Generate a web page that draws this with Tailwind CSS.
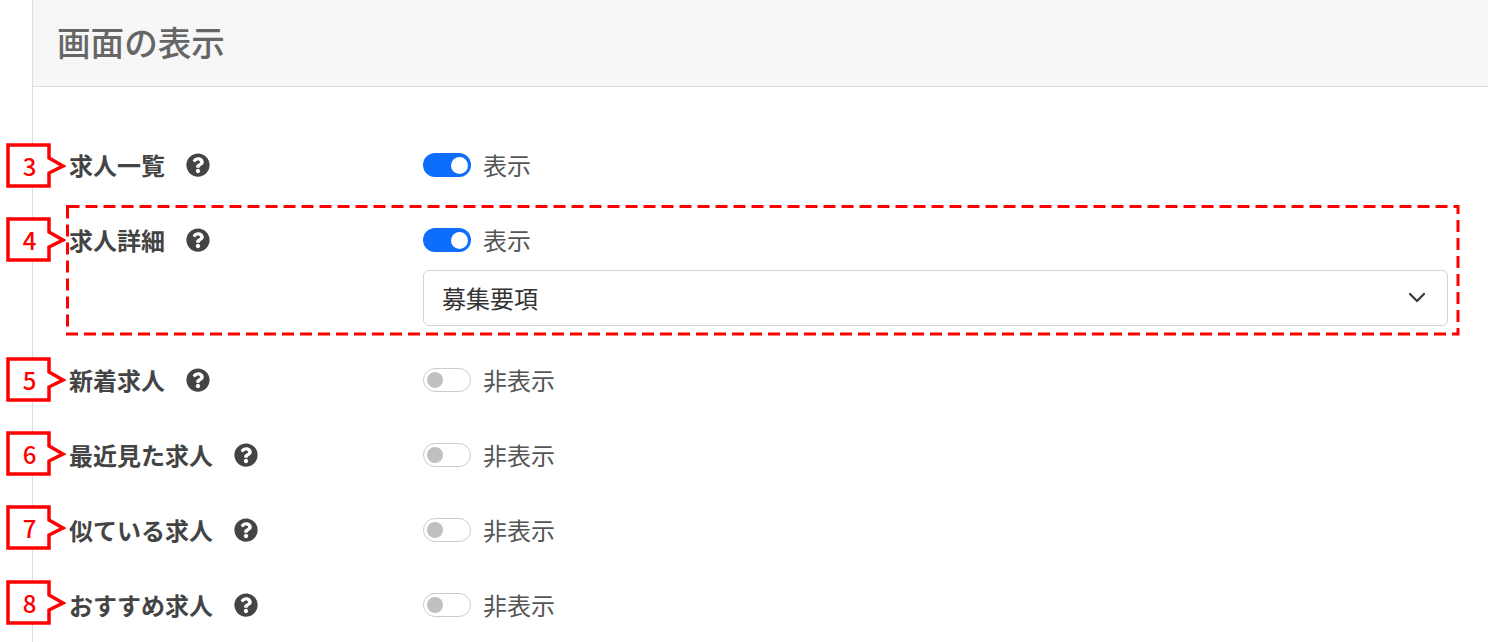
<!DOCTYPE html>
<html lang="ja">
<head>
    <meta charset="UTF-8">
    <meta name="viewport" content="width=device-width, initial-scale=1.0">
    <title>画面の表示</title>
    <script src="https://cdn.jsdelivr.net/npm/@tailwindcss/browser@4"></script>
</head>
<body class="relative h-[642px] overflow-hidden bg-white font-['Noto_Sans_CJK_JP','Noto_Sans',sans-serif]">
    <!-- Main panel -->
    <main class="ml-8 h-full border-l border-[#ddd]">
        <h1 class="h-[87px] border-b border-[#ddd] bg-[#f7f7f7] pl-6 pt-[18px] text-[33.6px] leading-[48px] font-medium text-[#666]">画面の表示</h1>

        <div class="pl-9 pt-[66px]">
            <div class="flex h-6 items-center">
                <div class="flex w-[354px] items-center gap-[21px]">
                    <span class="text-2xl font-bold text-[#444]">求人一覧</span>
                    <svg class="size-6 text-[#444]" viewBox="0 0 512 512"><path fill="currentColor" d="M504 256c0 136.997-111.043 248-248 248S8 392.997 8 256C8 119.083 119.043 8 256 8s248 111.083 248 248zM262.655 90c-54.497 0-89.255 22.957-116.549 63.758-3.536 5.286-2.353 12.415 2.715 16.258l34.699 26.31c5.205 3.947 12.621 3.008 16.665-2.122 17.864-22.658 30.113-35.797 57.303-35.797 20.429 0 45.698 13.148 45.698 32.958 0 14.976-12.363 22.667-32.534 33.976C247.128 238.528 216 254.941 216 296v4c0 6.627 5.373 12 12 12h56c6.627 0 12-5.373 12-12v-1.333c0-28.462 83.186-29.647 83.186-106.667 0-58.002-60.165-102-116.531-102zM256 338c-25.365 0-46 20.635-46 46 0 25.364 20.635 46 46 46s46-20.636 46-46c0-25.365-20.635-46-46-46z"/></svg>
                </div>
                <div class="flex items-center gap-3">
                    <span class="flex h-6 w-12 items-center justify-end rounded-full bg-[#0d6efd] px-[3px]"><span class="size-[17px] rounded-full bg-white"></span></span>
                    <span class="text-2xl text-[#555]">表示</span>
                </div>
            </div>

            <div class="mt-[51px] flex items-start">
                <div class="flex h-6 w-[354px] items-center gap-[21px]">
                    <span class="text-2xl font-bold text-[#444]">求人詳細</span>
                    <svg class="size-6 text-[#444]" viewBox="0 0 512 512"><path fill="currentColor" d="M504 256c0 136.997-111.043 248-248 248S8 392.997 8 256C8 119.083 119.043 8 256 8s248 111.083 248 248zM262.655 90c-54.497 0-89.255 22.957-116.549 63.758-3.536 5.286-2.353 12.415 2.715 16.258l34.699 26.31c5.205 3.947 12.621 3.008 16.665-2.122 17.864-22.658 30.113-35.797 57.303-35.797 20.429 0 45.698 13.148 45.698 32.958 0 14.976-12.363 22.667-32.534 33.976C247.128 238.528 216 254.941 216 296v4c0 6.627 5.373 12 12 12h56c6.627 0 12-5.373 12-12v-1.333c0-28.462 83.186-29.647 83.186-106.667 0-58.002-60.165-102-116.531-102zM256 338c-25.365 0-46 20.635-46 46 0 25.364 20.635 46 46 46s46-20.636 46-46c0-25.365-20.635-46-46-46z"/></svg>
                </div>
                <div class="w-[1025px]">
                    <div class="flex h-6 items-center gap-3">
                        <span class="flex h-6 w-12 items-center justify-end rounded-full bg-[#0d6efd] px-[3px]"><span class="size-[17px] rounded-full bg-white"></span></span>
                        <span class="text-2xl text-[#555]">表示</span>
                    </div>
                    <div class="mt-[18px] flex h-14 items-center justify-between rounded-md border border-[#ced4da] pl-[18px] pr-[22px]">
                        <span class="text-2xl text-[#333]">募集要項</span>
                        <svg class="size-4 text-[#343a40]" viewBox="0 0 16 16"><path fill="none" stroke="currentColor" stroke-linecap="round" stroke-linejoin="round" stroke-width="2.2" d="m1 4 7 7 7-7"/></svg>
                    </div>
                </div>
            </div>

            <div class="mt-[42px] flex h-6 items-center">
                <div class="flex w-[354px] items-center gap-[21px]">
                    <span class="text-2xl font-bold text-[#444]">新着求人</span>
                    <svg class="size-6 text-[#444]" viewBox="0 0 512 512"><path fill="currentColor" d="M504 256c0 136.997-111.043 248-248 248S8 392.997 8 256C8 119.083 119.043 8 256 8s248 111.083 248 248zM262.655 90c-54.497 0-89.255 22.957-116.549 63.758-3.536 5.286-2.353 12.415 2.715 16.258l34.699 26.31c5.205 3.947 12.621 3.008 16.665-2.122 17.864-22.658 30.113-35.797 57.303-35.797 20.429 0 45.698 13.148 45.698 32.958 0 14.976-12.363 22.667-32.534 33.976C247.128 238.528 216 254.941 216 296v4c0 6.627 5.373 12 12 12h56c6.627 0 12-5.373 12-12v-1.333c0-28.462 83.186-29.647 83.186-106.667 0-58.002-60.165-102-116.531-102zM256 338c-25.365 0-46 20.635-46 46 0 25.364 20.635 46 46 46s46-20.636 46-46c0-25.365-20.635-46-46-46z"/></svg>
                </div>
                <div class="flex items-center gap-3">
                    <span class="flex h-6 w-12 items-center rounded-full border border-[#ccc] bg-white px-[3px]"><span class="size-4 rounded-full bg-[#c0c0c0]"></span></span>
                    <span class="text-2xl text-[#555]">非表示</span>
                </div>
            </div>

            <div class="mt-[51px] flex h-6 items-center">
                <div class="flex w-[354px] items-center gap-[21px]">
                    <span class="text-2xl font-bold text-[#444]">最近見た求人</span>
                    <svg class="size-6 text-[#444]" viewBox="0 0 512 512"><path fill="currentColor" d="M504 256c0 136.997-111.043 248-248 248S8 392.997 8 256C8 119.083 119.043 8 256 8s248 111.083 248 248zM262.655 90c-54.497 0-89.255 22.957-116.549 63.758-3.536 5.286-2.353 12.415 2.715 16.258l34.699 26.31c5.205 3.947 12.621 3.008 16.665-2.122 17.864-22.658 30.113-35.797 57.303-35.797 20.429 0 45.698 13.148 45.698 32.958 0 14.976-12.363 22.667-32.534 33.976C247.128 238.528 216 254.941 216 296v4c0 6.627 5.373 12 12 12h56c6.627 0 12-5.373 12-12v-1.333c0-28.462 83.186-29.647 83.186-106.667 0-58.002-60.165-102-116.531-102zM256 338c-25.365 0-46 20.635-46 46 0 25.364 20.635 46 46 46s46-20.636 46-46c0-25.365-20.635-46-46-46z"/></svg>
                </div>
                <div class="flex items-center gap-3">
                    <span class="flex h-6 w-12 items-center rounded-full border border-[#ccc] bg-white px-[3px]"><span class="size-4 rounded-full bg-[#c0c0c0]"></span></span>
                    <span class="text-2xl text-[#555]">非表示</span>
                </div>
            </div>

            <div class="mt-[51px] flex h-6 items-center">
                <div class="flex w-[354px] items-center gap-[21px]">
                    <span class="text-2xl font-bold text-[#444]">似ている求人</span>
                    <svg class="size-6 text-[#444]" viewBox="0 0 512 512"><path fill="currentColor" d="M504 256c0 136.997-111.043 248-248 248S8 392.997 8 256C8 119.083 119.043 8 256 8s248 111.083 248 248zM262.655 90c-54.497 0-89.255 22.957-116.549 63.758-3.536 5.286-2.353 12.415 2.715 16.258l34.699 26.31c5.205 3.947 12.621 3.008 16.665-2.122 17.864-22.658 30.113-35.797 57.303-35.797 20.429 0 45.698 13.148 45.698 32.958 0 14.976-12.363 22.667-32.534 33.976C247.128 238.528 216 254.941 216 296v4c0 6.627 5.373 12 12 12h56c6.627 0 12-5.373 12-12v-1.333c0-28.462 83.186-29.647 83.186-106.667 0-58.002-60.165-102-116.531-102zM256 338c-25.365 0-46 20.635-46 46 0 25.364 20.635 46 46 46s46-20.636 46-46c0-25.365-20.635-46-46-46z"/></svg>
                </div>
                <div class="flex items-center gap-3">
                    <span class="flex h-6 w-12 items-center rounded-full border border-[#ccc] bg-white px-[3px]"><span class="size-4 rounded-full bg-[#c0c0c0]"></span></span>
                    <span class="text-2xl text-[#555]">非表示</span>
                </div>
            </div>

            <div class="mt-[51px] flex h-6 items-center">
                <div class="flex w-[354px] items-center gap-[21px]">
                    <span class="text-2xl font-bold text-[#444]">おすすめ求人</span>
                    <svg class="size-6 text-[#444]" viewBox="0 0 512 512"><path fill="currentColor" d="M504 256c0 136.997-111.043 248-248 248S8 392.997 8 256C8 119.083 119.043 8 256 8s248 111.083 248 248zM262.655 90c-54.497 0-89.255 22.957-116.549 63.758-3.536 5.286-2.353 12.415 2.715 16.258l34.699 26.31c5.205 3.947 12.621 3.008 16.665-2.122 17.864-22.658 30.113-35.797 57.303-35.797 20.429 0 45.698 13.148 45.698 32.958 0 14.976-12.363 22.667-32.534 33.976C247.128 238.528 216 254.941 216 296v4c0 6.627 5.373 12 12 12h56c6.627 0 12-5.373 12-12v-1.333c0-28.462 83.186-29.647 83.186-106.667 0-58.002-60.165-102-116.531-102zM256 338c-25.365 0-46 20.635-46 46 0 25.364 20.635 46 46 46s46-20.636 46-46c0-25.365-20.635-46-46-46z"/></svg>
                </div>
                <div class="flex items-center gap-3">
                    <span class="flex h-6 w-12 items-center rounded-full border border-[#ccc] bg-white px-[3px]"><span class="size-4 rounded-full bg-[#c0c0c0]"></span></span>
                    <span class="text-2xl text-[#555]">非表示</span>
                </div>
            </div>
        </div>
    </main>

    <!-- Red dashed highlight -->
    <svg class="absolute left-[64px] top-[204px]" width="1398" height="133" viewBox="0 0 1398 133"><rect x="3.5" y="2.5" width="1390.5" height="127.5" fill="none" stroke="#f00" stroke-width="3" stroke-dasharray="12 6"/></svg>

    <!-- Numbered callouts -->
    <div class="absolute left-[6px] top-[143px] h-[45px] w-[60px]">
        <svg class="absolute inset-0" width="60" height="45" viewBox="0 0 60 45"><path fill="#fff" stroke="#f00" stroke-width="3.5" d="M2 2H43V15L57 23 43 30V43H2Z"/></svg>
        <span class="absolute left-0 top-0 w-[47px] text-center text-2xl leading-[45px] font-medium text-[#f00]">3</span>
    </div>
    <div class="absolute left-[6px] top-[217px] h-[45px] w-[60px]">
        <svg class="absolute inset-0" width="60" height="45" viewBox="0 0 60 45"><path fill="#fff" stroke="#f00" stroke-width="3.5" d="M2 2H43V15L57 23 43 30V43H2Z"/></svg>
        <span class="absolute left-0 top-0 w-[47px] text-center text-2xl leading-[45px] font-medium text-[#f00]">4</span>
    </div>
    <div class="absolute left-[6px] top-[357px] h-[45px] w-[60px]">
        <svg class="absolute inset-0" width="60" height="45" viewBox="0 0 60 45"><path fill="#fff" stroke="#f00" stroke-width="3.5" d="M2 2H43V15L57 23 43 30V43H2Z"/></svg>
        <span class="absolute left-0 top-0 w-[47px] text-center text-2xl leading-[45px] font-medium text-[#f00]">5</span>
    </div>
    <div class="absolute left-[6px] top-[431px] h-[45px] w-[60px]">
        <svg class="absolute inset-0" width="60" height="45" viewBox="0 0 60 45"><path fill="#fff" stroke="#f00" stroke-width="3.5" d="M2 2H43V15L57 23 43 30V43H2Z"/></svg>
        <span class="absolute left-0 top-0 w-[47px] text-center text-2xl leading-[45px] font-medium text-[#f00]">6</span>
    </div>
    <div class="absolute left-[6px] top-[505px] h-[45px] w-[60px]">
        <svg class="absolute inset-0" width="60" height="45" viewBox="0 0 60 45"><path fill="#fff" stroke="#f00" stroke-width="3.5" d="M2 2H43V15L57 23 43 30V43H2Z"/></svg>
        <span class="absolute left-0 top-0 w-[47px] text-center text-2xl leading-[45px] font-medium text-[#f00]">7</span>
    </div>
    <div class="absolute left-[6px] top-[580px] h-[45px] w-[60px]">
        <svg class="absolute inset-0" width="60" height="45" viewBox="0 0 60 45"><path fill="#fff" stroke="#f00" stroke-width="3.5" d="M2 2H43V15L57 23 43 30V43H2Z"/></svg>
        <span class="absolute left-0 top-0 w-[47px] text-center text-2xl leading-[45px] font-medium text-[#f00]">8</span>
    </div>
</body>
</html>
